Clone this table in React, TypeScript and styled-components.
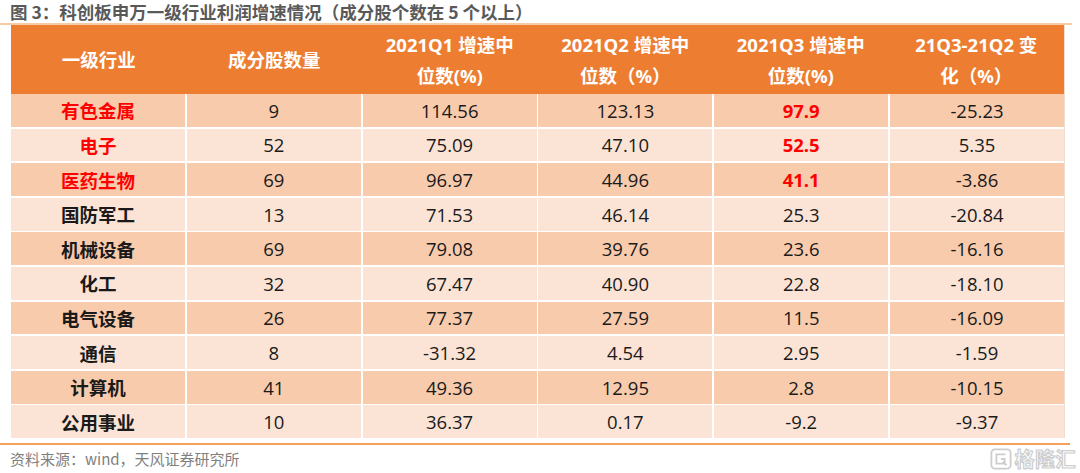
import styled, { createGlobalStyle } from "styled-components";

interface CellProps {
  $shade: "odd" | "even";
  $hot?: boolean;
  $bold?: boolean;
}

const GlobalStyle = createGlobalStyle`
  html, body {
    margin: 0;
    padding: 0;
    background: #ffffff;
  }
  body {
    font-family: "Open Sans", "Noto Sans CJK SC", sans-serif;
  }
`;

const Page = styled.div`
  width: 1080px;
  height: 473px;
  overflow: hidden;
  display: flex;
  flex-direction: column;
`;

const Title = styled.div`
  box-sizing: border-box;
  height: 23px;
  padding: 2px 0 0 10px;
  font-family: "Noto Sans CJK SC", sans-serif;
  font-size: 17.5px;
  font-weight: 700;
  color: #595959;
  line-height: 20px;
  white-space: nowrap;
`;

const Rule = styled.div<{ color: string; $width: number }>`
  width: ${(p) => p.$width}px;
  height: 2px;
  background: ${(p) => p.color};
`;

const Table = styled.div`
  margin-left: 11px;
  width: 1053px;
  border-right: 1px solid #f2dccb;
`;

const HeadRow = styled.div`
  display: grid;
  grid-template-columns: repeat(6, 1fr);
  height: 69px;
  background: #ed7d31;
`;

const HeadCell = styled.div`
  display: flex;
  align-items: center;
  justify-content: center;
  text-align: center;
  color: #ffffff;
  font-weight: 700;
  font-size: 18.5px;
  line-height: 31px;
  white-space: pre-line;
`;

const Body = styled.div`
  display: grid;
  grid-template-columns: repeat(6, 1fr);
  grid-auto-rows: 32.8px;
  gap: 1.8px;
  background: #ffffff;
`;

const Cell = styled.div<CellProps>`
  display: flex;
  align-items: center;
  justify-content: center;
  background: ${(p) => (p.$shade === "odd" ? "#f8cbad" : "#fbe4d5")};
  color: ${(p) => (p.$hot ? "#ff0000" : "#1a1a1a")};
  font-weight: ${(p) => (p.$bold ? 700 : 400)};
  font-size: 18.5px;
`;

const Footer = styled.div`
  display: flex;
  justify-content: space-between;
  align-items: center;
  padding: 0 4px 0 10px;
  height: 27px;
`;

const Source = styled.span`
  font-family: "Noto Sans CJK SC", sans-serif;
  font-size: 15px;
  color: #7f7f7f;
`;

const Logo = styled.div`
  display: flex;
  align-items: center;
  gap: 3px;
  font-family: "Noto Sans CJK SC", sans-serif;
  color: #ffffff;
  font-size: 20px;
  font-weight: 700;
  letter-spacing: 0.5px;
  -webkit-text-stroke: 1.2px #cdcdcd;
`;

const header = [
  "一级行业",
  "成分股数量",
  "2021Q1 增速中\n位数(%)",
  "2021Q2 增速中\n位数（%）",
  "2021Q3 增速中\n位数(%)",
  "21Q3-21Q2 变\n化（%）",
];

const rows: [string, string, string, string, string, string, boolean][] = [
  ["有色金属", "9", "114.56", "123.13", "97.9", "-25.23", true],
  ["电子", "52", "75.09", "47.10", "52.5", "5.35", true],
  ["医药生物", "69", "96.97", "44.96", "41.1", "-3.86", true],
  ["国防军工", "13", "71.53", "46.14", "25.3", "-20.84", false],
  ["机械设备", "69", "79.08", "39.76", "23.6", "-16.16", false],
  ["化工", "32", "67.47", "40.90", "22.8", "-18.10", false],
  ["电气设备", "26", "77.37", "27.59", "11.5", "-16.09", false],
  ["通信", "8", "-31.32", "4.54", "2.95", "-1.59", false],
  ["计算机", "41", "49.36", "12.95", "2.8", "-10.15", false],
  ["公用事业", "10", "36.37", "0.17", "-9.2", "-9.37", false],
];

const LogoMark = () => (
  <svg width="22" height="22" viewBox="0 0 24 24">
    <rect x="1.5" y="1.5" width="21" height="21" rx="4" fill="none" stroke="#cdcdcd" strokeWidth="2" />
    <path
      d="M17 7 H7 V17 H16 V12 H12 M14 15 L18 19"
      fill="none"
      stroke="#cdcdcd"
      strokeWidth="2"
    />
  </svg>
);

export default function App() {
  return (
    <Page>
      <GlobalStyle />
      <Title>图 3：科创板申万一级行业利润增速情况（成分股个数在 5 个以上）</Title>
      <Rule color="#f7cba4" $width={1072} />
      <Table>
        <HeadRow>
          {header.map((h) => (
            <HeadCell key={h}>{h}</HeadCell>
          ))}
        </HeadRow>
        <Body>
          {rows.map((r, i) => {
            const shade = i % 2 === 0 ? "odd" : "even";
            const hot = r[6];
            return r.slice(0, 6).map((v, j) => (
              <Cell
                key={`${i}-${j}`}
                $shade={shade}
                $hot={hot && (j === 0 || j === 4)}
                $bold={j === 0 || (hot && j === 4)}
              >
                {v as string}
              </Cell>
            ));
          })}
        </Body>
      </Table>
      <div style={{ height: 5 }} />
      <Rule color="#f5a15c" $width={1070} />
      <Footer>
        <Source>资料来源：wind，天风证券研究所</Source>
        <Logo>
          <LogoMark />
          格隆汇
        </Logo>
      </Footer>
    </Page>
  );
}
